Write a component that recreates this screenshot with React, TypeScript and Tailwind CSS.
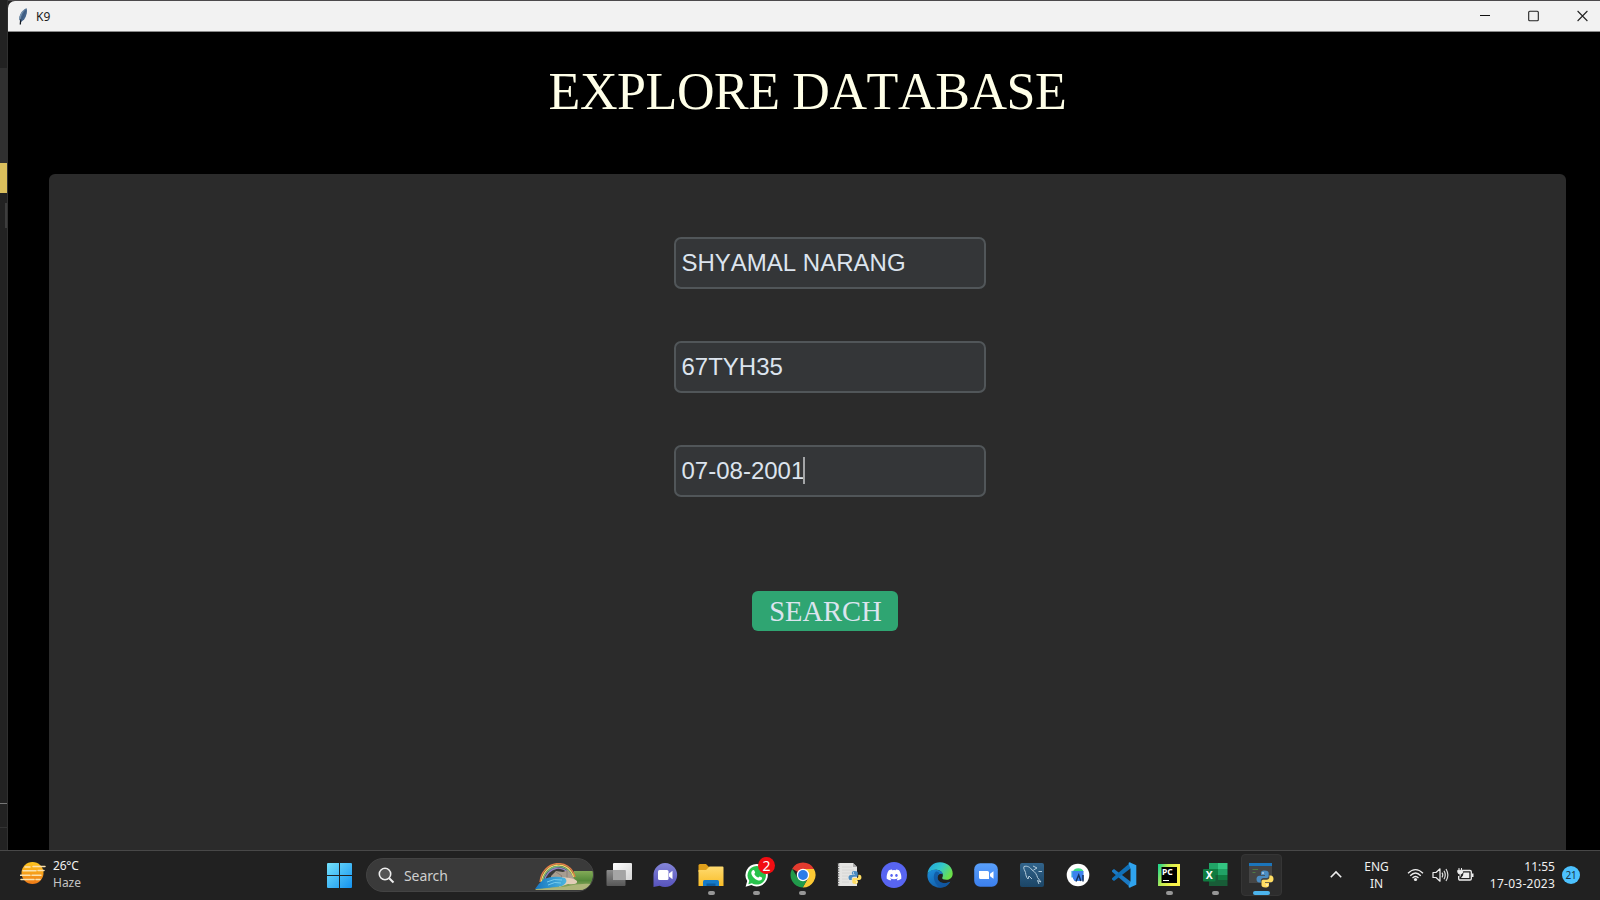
import React from "react";
import { FaDiscord } from "react-icons/fa";

const ui = "font-['Noto_Sans','Open_Sans',sans-serif]";

function Feather() {
  return (
    <svg width="10" height="17" viewBox="0 0 10 17">
      <path d="M8.6 0.3C9.6 3 8.8 8 6.2 11.4L3 14L1.2 11.6C1 7.600 4 2 8.600 0.300Z" fill="#45658c" />
      <path d="M8.400 0.500C5 3 2.800 7 2.300 12.500L1.200 11.500C1 7.500 4 2 8.400 0.500Z" fill="#7893ad" />
      <path d="M2.700 11.500L2.300 16.500" stroke="#141a22" strokeWidth="1.300" />
      <path d="M7.500 3L2.800 13" stroke="#3a5678" strokeWidth="0.800" />
    </svg>
  );
}

function TitleBar() {
  return (
    <header className="flex h-[31px] items-center rounded-tl-[7px] border-b border-[#8a8a8a] bg-[#f2f2f2] pl-[10px]">
      <Feather />
      <span className={`${ui} ml-[8px] mt-px text-[12px] leading-4 text-[#1a1a1a]`}>K9</span>
      <div className="ml-auto flex items-center gap-[38px] pr-[12px]">
        <svg width="10" height="12" viewBox="0 0 10 12"><path d="M0 5.500H10" stroke="#111" strokeWidth="1" /></svg>
        <svg width="11" height="12" viewBox="0 0 11 12"><rect x="0.700" y="1.200" width="9.600" height="9.600" rx="1" fill="none" stroke="#222" strokeWidth="1.100" /></svg>
        <svg width="11" height="12" viewBox="0 0 11 12"><path d="M0.600 1L10.400 11M10.400 1L0.600 11" stroke="#222" strokeWidth="1.100" /></svg>
      </div>
    </header>
  );
}

function Field({ value, active }: { value: string; active?: boolean }) {
  return (
    <div className="flex h-[52px] w-[312px] items-center rounded-[7px] border-2 border-[#515659] bg-[#343638] pb-px pl-[5.500px] font-['Liberation_Sans',Arial,sans-serif] text-[24px] leading-none text-[#dce4ee] [font-kerning:none]">
      <span>{value}</span>
      {active && <span className="-ml-px h-[27px] w-[2px] bg-[#a3a5a7]" />}
    </div>
  );
}

function BackgroundStrip() {
  return (
    <aside className="flex w-[8px] shrink-0 flex-col border-r border-[#303030] bg-[#222222]">
      <div className="h-[68px]" />
      <div className="h-[95px] bg-[#303030]" />
      <div className="h-[30px] bg-[#dabf5d]" />
      <div className="mt-[10px] h-[25px] w-[2px] self-end bg-[#3d3d3d]" />
      <div className="mt-[575px] h-px bg-[#777777]" />
      <div className="mt-[23px] h-px bg-[#333333]" />
    </aside>
  );
}

function TaskView() {
  return (
    <svg width="26" height="26" viewBox="0 0 26 26">
      <defs>
        <linearGradient id="tv1" x1="0" y1="0" x2="1" y2="1"><stop stopColor="#fff" /><stop offset="1" stopColor="#d4d4d4" /></linearGradient>
        <linearGradient id="tv2" x1="0" y1="0" x2="0" y2="1"><stop stopColor="#8c8c8c" /><stop offset="1" stopColor="#575757" /></linearGradient>
      </defs>
      <rect x="7" y="1" width="19" height="17" rx="1" fill="url(#tv1)" />
      <rect x="0.500" y="8" width="19" height="16" rx="1" fill="url(#tv2)" />
      <rect x="7" y="8" width="12.500" height="10" fill="#a5a5a5" />
    </svg>
  );
}

function Chat() {
  return (
    <svg width="26" height="26" viewBox="0 0 26 26">
      <defs><linearGradient id="ch" x1="0" y1="0" x2="0" y2="1"><stop stopColor="#8485d8" /><stop offset="1" stopColor="#5753bd" /></linearGradient></defs>
      <path d="M13 1a12 12 0 1 1-5.300 22.700L1.500 25V13A12 12 0 0 1 13 1z" fill="url(#ch)" />
      <rect x="6" y="8" width="10.500" height="10" rx="1.500" fill="#fff" />
      <path d="M17 11.500L20.500 8.700V17.300L17 14.500Z" fill="#fff" />
    </svg>
  );
}

function Explorer() {
  return (
    <svg width="26" height="26" viewBox="0 0 26 26">
      <defs><linearGradient id="fo" x1="0" y1="0" x2="0" y2="1"><stop stopColor="#ffdb70" /><stop offset="1" stopColor="#f9bd28" /></linearGradient></defs>
      <path d="M0.500 3.500Q0.500 2 2 2H8L11 5V10H0.500Z" fill="#e0a01b" />
      <path d="M0.500 8H8L11.500 4.500H24.500Q25.500 4.500 25.500 5.500V24H0.500Z" fill="url(#fo)" />
      <path d="M5 24V19.500Q5 18 6.500 18H19.500Q21 18 21 19.500V24Z" fill="#157ac8" />
      <path d="M8.500 24V21.500H17.500V24Z" fill="#0d5c9f" />
    </svg>
  );
}

function WhatsApp() {
  return (
    <div className="relative">
      <svg width="26" height="26" viewBox="0 0 26 26">
        <path d="M12.500 2a11.200 11.200 0 1 1-5.100 21.100L1.600 24.700l1.600-5.600A11.200 11.200 0 0 1 12.500 2z" fill="#fff" />
        <path d="M12.500 4a9.300 9.300 0 1 1-4.600 17.300L4.300 22.200l1-3.500A9.300 9.300 0 0 1 12.500 4z" fill="#27c14b" />
        <path d="M8.700 8.200c.7-.5 1.400-.2 1.600.3l.8 1.800c.2.500-.9 1.500-.7 1.900.8 1.600 2.100 2.700 3.700 3.400.5.200 1.300-1.200 1.700-1l2 1c.6.300.4 1.500-.3 2.200-1 .9-2.400 1-3.900.4-3-1.200-5-3.200-6.100-6-.5-1.500 0-3.200 1.200-4z" fill="#fff" />
      </svg>
      <span className="absolute -top-[5px] left-[14px] flex size-[17px] items-center justify-center rounded-full bg-[#f20d12] font-['Noto_Sans',sans-serif] text-[14px] leading-none text-white">2</span>
    </div>
  );
}

function Chrome() {
  return (
    <svg width="26" height="26" viewBox="0 0 26 26">
      <path d="M13 13L2.170 6.750A12.500 12.500 0 0 1 23.830 6.750Z" fill="#e33b2e" />
      <path d="M13 7H23.960A12.500 12.500 0 0 1 12.700 25.500L18.200 16Z" fill="#fcc934" />
      <path d="M2.170 6.750L7.800 16L13 19H16.500L12.700 25.500A12.500 12.500 0 0 1 2.170 6.750Z" fill="#219a4b" />
      <circle cx="13" cy="13" r="6.200" fill="#fff" />
      <circle cx="13" cy="13" r="4.900" fill="#2b7de9" />
    </svg>
  );
}

function PythonLogo({ x, y, s }: { x: number; y: number; s: number }) {
  return (
    <g transform={`translate(${x} ${y}) scale(${s})`}>
      <path d="M8 0C5 0 4.500 1.200 4.500 2.500V4.500H8.500V5.200H3C1 5.200 0 6.500 0 8.500S1 12 2.700 12H4.300V10C4.300 8.500 5.500 7.500 7 7.500H10.500C11.500 7.500 12.200 6.700 12.200 5.500V2.500C12.200 1 11 0 8 0Z" fill="#4a8cc2" />
      <path d="M9 17C12 17 12.500 15.800 12.500 14.500V12.500H8.500V11.800H14C16 11.800 17 10.500 17 8.500S16 5 14.300 5H12.900V6.800C12.900 8.300 11.700 9.300 10.200 9.300H6.700C5.700 9.300 5 10 5 11.200V14.500C5 16 6 17 9 17Z" fill="#ffdd62" />
      <circle cx="6.500" cy="2.500" r=".8" fill="#fff" />
      <circle cx="10.500" cy="14.500" r=".8" fill="#fff" />
    </g>
  );
}

function Notebook() {
  return (
    <svg width="26" height="26" viewBox="0 0 26 26">
      <path d="M2 1H17L21 5V24H2Z" fill="#e4e4e2" />
      <path d="M17 1V5H21Z" fill="#aaa" />
      <path d="M2.500 1V24" stroke="#777" strokeWidth="1.500" strokeDasharray="1.500 1" />
      <path d="M6 5H16M6 8H18M6 11H17M6 14H12M6 17H12M6 20H13" stroke="#d0d0d0" strokeWidth=".8" />
      <PythonLogo x={12.500} y={9} s={0.76} />
    </svg>
  );
}

function Discord() {
  return (
    <div className="flex size-[26px] items-center justify-center rounded-full bg-[#5865f2]">
      <FaDiscord className="size-[16px] text-white" />
    </div>
  );
}

function Edge() {
  return (
    <svg width="26" height="26" viewBox="0 0 26 26">
      <defs>
        <linearGradient id="ed1" x1="0" y1="0" x2="1" y2=".5"><stop stopColor="#1f9fe0" /><stop offset=".55" stopColor="#34c9c9" /><stop offset="1" stopColor="#6be04a" /></linearGradient>
        <linearGradient id="ed2" x1="0" y1="0" x2=".6" y2="1"><stop stopColor="#1c8fdc" /><stop offset="1" stopColor="#135da8" /></linearGradient>
      </defs>
      <path d="M0.500 12C1 5 6.500 0.300 13 0.300C20.500 0.300 25.700 5.500 25.700 11.500C25.700 15.500 22.800 17.800 19.500 17.800C16.500 17.800 14.800 16.800 15.200 15.800C17 13 15.500 9 11 8C6.500 7.300 2 9 0.500 12Z" fill="url(#ed1)" />
      <path d="M0.400 12.800C1.300 9.500 5 7.500 9 7.800C13 8 15.500 10 15.800 12.200C14 10.800 10.500 12 10.500 15.500C10.500 19.500 15 22.500 21 20.500L23.300 19.800C21.200 23.600 17.500 25.700 13 25.700C5.500 25.700 0 19.800 0.400 12.800Z" fill="url(#ed2)" />
      <path d="M9 9.500C5.500 12.500 5.800 20.500 13 25.700C17.500 25.700 21.200 23.600 23.300 19.800C16 23 10.500 19.500 10.500 15.500C10.500 13.500 11.500 12.300 12.600 11.700C12 10 10.500 9.200 9 9.500Z" fill="#10549d" opacity=".75" />
    </svg>
  );
}

function Zoom() {
  return (
    <svg width="26" height="26" viewBox="0 0 26 26">
      <defs><linearGradient id="zo" x1="0" y1="0" x2="0" y2="1"><stop stopColor="#5aa0fb" /><stop offset="1" stopColor="#3b7fee" /></linearGradient></defs>
      <rect x="1.200" y="1.200" width="23.600" height="23.600" rx="6" fill="url(#zo)" />
      <path d="M6 9H14.500Q16 9 16 10.500V17H7.500Q6 17 6 15.500ZM17 11.800L20.500 9.200V16.800L17 14.200Z" fill="#fff" />
    </svg>
  );
}

function MySql() {
  return (
    <svg width="26" height="26" viewBox="0 0 26 26">
      <defs><linearGradient id="my" x1="0" y1="0" x2="0" y2="1"><stop stopColor="#32648b" /><stop offset="1" stopColor="#1b4566" /></linearGradient></defs>
      <rect x="1" y="1" width="24" height="24" rx="2" fill="url(#my)" />
      <path d="M5 4.500C8 3.500 11 5 13 8C16 9.500 18 13 18.500 15.500L22 20L18.500 18.500L20 22M5 4.500C4 6.500 6 8.500 6.500 10.500C7 13 7 15 9 17L10 14L13 17M14 4L18 6L14.500 8M19.500 9.500H23" fill="none" stroke="#b3cbdb" strokeWidth="1" />
    </svg>
  );
}

function AndroidStudio() {
  return (
    <svg width="26" height="26" viewBox="0 0 26 26">
      <circle cx="13" cy="13" r="11.300" fill="#fff" />
      <path d="M8 9.500A5.500 4.500 0 0 1 18.500 9.500Z" fill="#3ddc84" />
      <path d="M8 9H18.500V18L15 19H9.500L8 16.500Z" fill="#3d82ee" />
      <path d="M7.200 9.500V15" stroke="#2f9ee0" strokeWidth="1.500" strokeLinecap="round" />
      <path d="M11 19.500L13.700 13L15.800 19M18 13V19.500" fill="none" stroke="#14325e" strokeWidth="1.500" />
    </svg>
  );
}

function VsCode() {
  return (
    <svg width="26" height="26" viewBox="0 0 26 26">
      <path d="M1 8.500L3 7L19.500 19.500V25.500L1 9.700Z" fill="#1b7ac4" />
      <path d="M1 17.500L3 19L19.500 6.500V0.500L1 16.300Z" fill="#1070b8" />
      <path d="M18.500 0.300L25.300 3.300V22.700L18.500 25.700L17.500 25L19.500 19V7L17.500 1Z" fill="#2fa3ee" />
    </svg>
  );
}

function PyCharm() {
  return (
    <svg width="26" height="26" viewBox="0 0 26 26">
      <defs><linearGradient id="pc" x1="0" y1=".2" x2=".8" y2=".5"><stop stopColor="#25d68a" /><stop offset=".45" stopColor="#c1ec50" /><stop offset="1" stopColor="#faf34b" /></linearGradient></defs>
      <rect x="2" y="2" width="22" height="22" fill="url(#pc)" />
      <rect x="5.500" y="5" width="15.500" height="16" fill="#000" />
      <text x="6" y="13" fontFamily="Noto Sans" fontWeight="700" fontSize="8.500" fill="#fff">PC</text>
      <path d="M7 18.500H13" stroke="#fff" strokeWidth="1" />
    </svg>
  );
}

function Excel() {
  return (
    <svg width="26" height="26" viewBox="0 0 26 26">
      <path d="M7 1H16V7H7Z" fill="#21a366" /><path d="M16 1H25.500V7H16Z" fill="#33c481" />
      <path d="M7 7H16V13H7Z" fill="#107c41" /><path d="M16 7H25.500V13H16Z" fill="#21a366" />
      <path d="M7 13H16V24H7Z" fill="#185c37" /><path d="M16 13H25.500V18H16Z" fill="#107c41" /><path d="M16 18H25.500V24H16Z" fill="#185c37" />
      <rect x="1" y="7" width="12.500" height="12.500" rx="1" fill="#107c41" />
      <text x="7.200" y="17" textAnchor="middle" fontFamily="Noto Sans" fontWeight="700" fontSize="10.500" fill="#fff">X</text>
    </svg>
  );
}

function PythonApp() {
  return (
    <svg width="26" height="26" viewBox="0 0 26 26">
      <rect x="1" y="1" width="23" height="20" fill="#454545" />
      <rect x="1" y="1" width="23" height="3" fill="#1b75bb" />
      <path d="M4.500 7.500H10M4.500 10.500H7.500" stroke="#4f7a45" strokeWidth="1" />
      <PythonLogo x={8.500} y={8.500} s={1} />
    </svg>
  );
}

const apps = [
  { icon: <TaskView /> },
  { icon: <Chat /> },
  { icon: <Explorer />, open: true },
  { icon: <WhatsApp />, open: true },
  { icon: <Chrome />, open: true },
  { icon: <Notebook /> },
  { icon: <Discord /> },
  { icon: <Edge /> },
  { icon: <Zoom /> },
  { icon: <MySql /> },
  { icon: <AndroidStudio /> },
  { icon: <VsCode /> },
  { icon: <PyCharm />, open: true },
  { icon: <Excel />, open: true },
  { icon: <PythonApp />, active: true },
];

function Haze() {
  return (
    <svg width="26" height="24" viewBox="0 0 26 24">
      <defs><linearGradient id="hz" x1="0" y1="0" x2="0" y2="1"><stop stopColor="#fdc51e" /><stop offset="1" stopColor="#ee7a17" /></linearGradient></defs>
      <circle cx="12.500" cy="12" r="11" fill="url(#hz)" />
      <path d="M5 6H10M13 5.500H25M3 9.700H16M18 9.500H24M0.500 14.300H10M12 14.300H21M1 18.500H14M16 18.500H20" stroke="#fbe1ac" strokeWidth="1.500" strokeLinecap="round" />
    </svg>
  );
}

function SearchArt() {
  return (
    <svg width="60" height="28" viewBox="0 0 60 28">
      <defs>
        <linearGradient id="gr" x1="0" y1="0" x2="0" y2="1"><stop stopColor="#83aa57" /><stop offset=".5" stopColor="#568a3a" /><stop offset="1" stopColor="#a9b573" /></linearGradient>
        <linearGradient id="rv" x1="0" y1="0" x2="1" y2="0"><stop stopColor="#1675c0" /><stop offset="1" stopColor="#4cb5df" /></linearGradient>
      </defs>
      <path d="M40 8H59V14Q57 27 45 27H1L10 20H36Z" fill="url(#gr)" />
      <g fill="none" strokeWidth="1.300">
        <path d="M6 19C8 -3 36 -6 41 14" stroke="#e77e46" />
        <path d="M7.300 19C10 -1 34 -4 39.500 14" stroke="#f0d86a" />
        <path d="M8.600 19C11 1 33 -2 38 14" stroke="#70b584" />
        <path d="M9.900 19C13 3 31 0 36.500 14" stroke="#9382c6" />
      </g>
      <path d="M17 13L22 8L29 9L34 7L38 12L41 17L30 19L17 16Z" fill="#a89d90" />
      <path d="M22 9L28 13L25 17M33 8V16" fill="none" stroke="#8a8178" strokeWidth="1" />
      <path d="M28 14Q41 15 43 18Q44 22 34 21L25 24Z" fill="#e2cdb7" />
      <path d="M10 16Q20 12 31 15Q35 19 28 23Q17 25 1 26Q5 20 10 16Z" fill="url(#rv)" />
      <path d="M13 19Q20 15 28 17M14 22Q21 18 27 20" fill="none" stroke="#7fd0ee" strokeWidth="0.900" />
      <path d="M1 27Q20 24 30 24Q44 20 58 21Q55 27 45 27Z" fill="#aeb57a" />
    </svg>
  );
}

function Taskbar() {
  return (
    <footer className={`${ui} flex h-[50px] shrink-0 border-t border-[#484848] bg-[#212121] text-[12px] leading-[17px] text-[#f0f0f0]`}>
      <div className="flex w-[327px] shrink-0 items-start pl-[20px]">
        <div className="mt-[10px]"><Haze /></div>
        <div className="ml-[7px] mt-[6px]">
          <div className="tracking-[-0.2px]">26°C</div>
          <div className="text-[#c4c4c4]">Haze</div>
        </div>
      </div>
      <svg className="mt-[12px] shrink-0" width="25" height="25" viewBox="0 0 25 25">
        <defs><linearGradient id="wn" x1="0" y1="0" x2="1" y2="1"><stop stopColor="#74e2fc" /><stop offset="1" stopColor="#1492ef" /></linearGradient></defs>
        <path d="M1 0H12V12H0V1Q0 0 1 0ZM13 0H24Q25 0 25 1V12H13ZM0 13H12V25H1Q0 25 0 24ZM13 13H25V24Q25 25 24 25H13Z" fill="url(#wn)" />
      </svg>
      <div className="ml-[14px] mt-[7px] flex h-[34px] w-[228px] shrink-0 items-center overflow-hidden rounded-full border border-[#434343] bg-[#3a3a3a] pl-[11px]">
        <svg width="17" height="17" viewBox="0 0 17 17">
          <circle cx="7" cy="7" r="5.700" fill="#555" stroke="#eee" strokeWidth="1.600" />
          <path d="M11.200 11.200L15.500 15.500" stroke="#eee" strokeWidth="2" />
        </svg>
        <span className="ml-[9px] text-[14px] tracking-[-0.1px] text-[#cfcfcf]">Search</span>
        <div className="-mr-px ml-auto mt-[3px]"><SearchArt /></div>
      </div>
      <nav className="ml-[2.500px] flex shrink-0">
        {apps.map((app, i) => (
          <div key={i} className="flex h-[49px] w-[45.830px] justify-center pt-[3px]">
            <div className={app.active ? "flex h-[42px] w-[41px] flex-col items-center rounded-[4px] border border-[#353535] bg-[#2d2d2d] pt-[7px]" : "flex h-[42px] w-[41px] flex-col items-center pt-[8px]"}>
              <div className="h-[26px]">{app.icon}</div>
              {app.open && <div className="mt-[3px] h-[4px] w-[7px] rounded-full bg-[#979797]" />}
              {app.active && <div className="mt-[3px] h-[4px] w-[17px] shrink-0 rounded-full bg-[#4cb4ec]" />}
            </div>
          </div>
        ))}
      </nav>
      <div className="ml-auto flex items-start pr-[20px]">
        <svg className="mt-[19px]" width="12" height="9" viewBox="0 0 12 9"><path d="M0.800 7.300L6 2L11.200 7.300" fill="none" stroke="#eee" strokeWidth="1.600" /></svg>
        <div className="ml-[22px] mt-[7px] text-center">ENG<br />IN</div>
        <svg className="ml-[18px] mt-[17px]" width="17" height="14" viewBox="0 0 17 14">
          <path d="M1 5.200Q8.500 -2 16 5.200M3.200 7.700Q8.500 2.300 13.800 7.700M5.500 10Q8.500 7 11.500 10" fill="none" stroke="#eee" strokeWidth="1.300" />
          <circle cx="8.500" cy="11.500" r="1.600" fill="#eee" />
        </svg>
        <svg className="ml-[8px] mt-[16px]" width="17" height="16" viewBox="0 0 17 16">
          <path d="M1 5.500H4L8 1.800V14.200L4 10.500H1Z" fill="none" stroke="#eee" strokeWidth="1.200" strokeLinejoin="round" />
          <path d="M10 5.700Q11.500 8 10 10.300M12 3.800Q14.500 8 12 12.200M14 2Q17.700 8 14 14" fill="none" stroke="#ddd" strokeWidth="1.200" />
        </svg>
        <svg className="ml-[8px] mt-[16px]" width="17" height="15" viewBox="0 0 17 15">
          <path d="M5.500 3.500H13Q14.300 3.500 14.300 4.800V11.700Q14.300 13 13 13H3Q1.700 13 1.700 11.700V9" fill="none" stroke="#eee" strokeWidth="1.300" />
          <path d="M6.500 5.500H12.300V11H4L6 8.500Z" fill="#eee" />
          <path d="M15 6.500H16.500V10H15Z" fill="#eee" />
          <path d="M2 1V3.300M4.500 1V3.300M0.800 3.300H5.600V5Q5.600 7 3.200 7Q0.800 7 0.800 5ZM3.200 7V9.500" fill="#eee" stroke="#eee" strokeWidth="1" />
        </svg>
        <div className="ml-[16px] mt-[7px] text-right tracking-[0.250px]"><span className="tracking-normal">11:55</span><br />17-03-2023</div>
        <div className="ml-[7px] mt-[15px] flex size-[18px] items-center justify-center rounded-full bg-[#4cc2ff] text-[10px] tracking-[-0.300px] text-[#173444]">21</div>
      </div>
    </footer>
  );
}

export default function App() {
  return (
    <div className="flex h-[900px] w-[1600px] flex-col overflow-hidden bg-[#222222]">
      <div className="flex min-h-0 flex-1">
        <BackgroundStrip />
        <main className="flex min-w-0 flex-1 flex-col border-t border-[#4c4a4c]">
          <TitleBar />
          <div className="flex min-h-0 flex-1 flex-col bg-black pl-[41px] pr-[34px]">
            <h1 className="flex h-[142px] items-start justify-center pt-[30px] font-['Liberation_Serif','Times_New_Roman',serif] text-[52px] leading-[60px] tracking-[-0.400px] text-[#ffffe8] [font-kerning:none]">EXPLORE DATABASE</h1>
            <section className="flex min-h-0 flex-1 flex-col items-start rounded-t-[6px] bg-[#2b2b2b] pl-[625px] pt-[63px]">
              <div className="flex flex-col gap-[52px]">
                <Field value="SHYAMAL NARANG" />
                <Field value="67TYH35" />
                <Field value="07-08-2001" active />
              </div>
              <button className="ml-[78px] mt-[94px] h-[40px] w-[146px] rounded-[6px] bg-[#2fa572] pl-px pt-px font-['Liberation_Serif','Times_New_Roman',serif] text-[28.500px] leading-[40px] text-[#dce4ee] [font-kerning:none]">SEARCH</button>
            </section>
          </div>
        </main>
      </div>
      <Taskbar />
    </div>
  );
}
